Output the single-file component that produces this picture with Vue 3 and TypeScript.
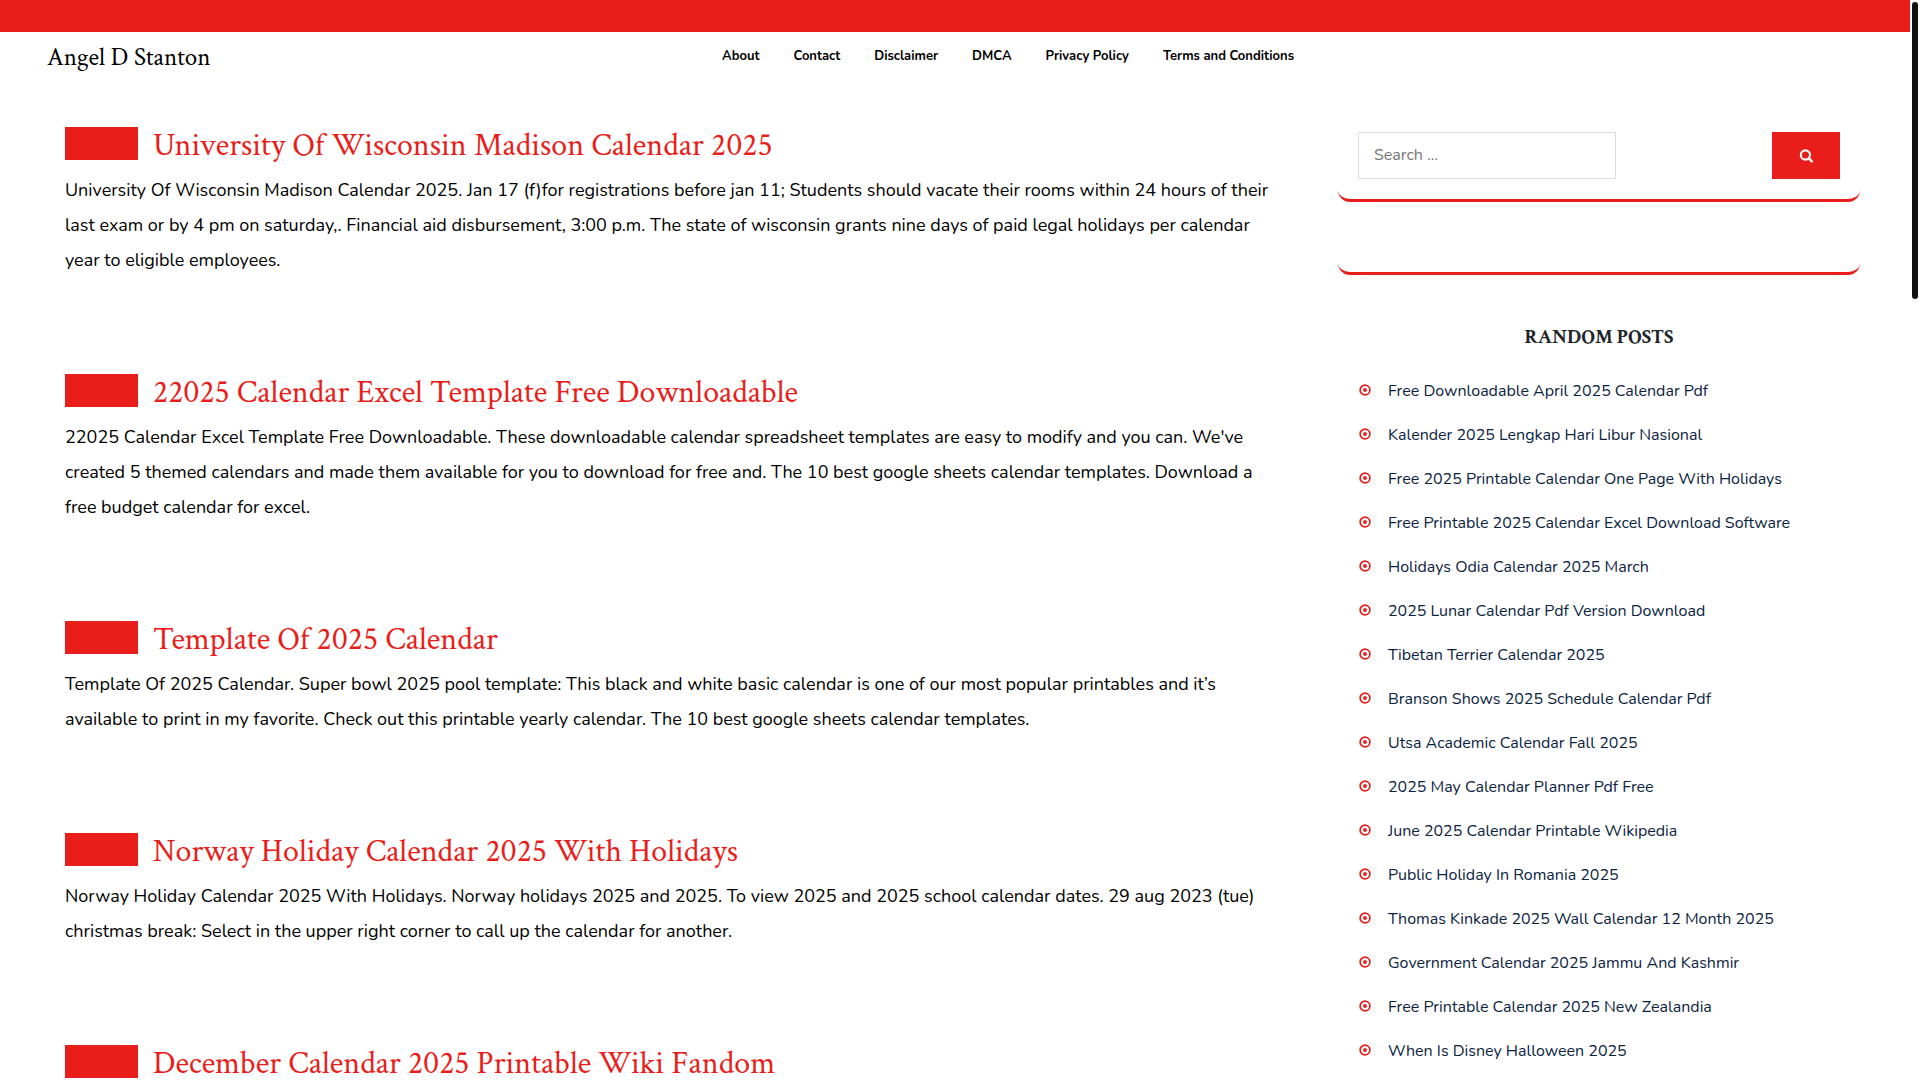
<script setup lang="ts">
interface Post {
  title: string
  excerpt: string
}

const pages: string[] = ['About', 'Contact', 'Disclaimer', 'DMCA', 'Privacy Policy', 'Terms and Conditions']

const posts: Post[] = [
  {
    title: 'University Of Wisconsin Madison Calendar 2025',
    excerpt:
      'University Of Wisconsin Madison Calendar 2025. Jan 17 (f)for registrations before jan 11; Students should vacate their rooms within 24 hours of their last exam or by 4 pm on saturday,. Financial aid disbursement, 3:00 p.m. The state of wisconsin grants nine days of paid legal holidays per calendar year to eligible employees.',
  },
  {
    title: '22025 Calendar Excel Template Free Downloadable',
    excerpt:
      "22025 Calendar Excel Template Free Downloadable. These downloadable calendar spreadsheet templates are easy to modify and you can. We've created 5 themed calendars and made them available for you to download for free and. The 10 best google sheets calendar templates. Download a free budget calendar for excel.",
  },
  {
    title: 'Template Of 2025 Calendar',
    excerpt:
      'Template Of 2025 Calendar. Super bowl 2025 pool template: This black and white basic calendar is one of our most popular printables and it’s available to print in my favorite. Check out this printable yearly calendar. The 10 best google sheets calendar templates.',
  },
  {
    title: 'Norway Holiday Calendar 2025 With Holidays',
    excerpt:
      'Norway Holiday Calendar 2025 With Holidays. Norway holidays 2025 and 2025. To view 2025 and 2025 school calendar dates. 29 aug 2023 (tue) christmas break: Select in the upper right corner to call up the calendar for another.',
  },
  { title: 'December Calendar 2025 Printable Wiki Fandom', excerpt: '' },
]

const randomPosts: string[] = [
  'Free Downloadable April 2025 Calendar Pdf',
  'Kalender 2025 Lengkap Hari Libur Nasional',
  'Free 2025 Printable Calendar One Page With Holidays',
  'Free Printable 2025 Calendar Excel Download Software',
  'Holidays Odia Calendar 2025 March',
  '2025 Lunar Calendar Pdf Version Download',
  'Tibetan Terrier Calendar 2025',
  'Branson Shows 2025 Schedule Calendar Pdf',
  'Utsa Academic Calendar Fall 2025',
  '2025 May Calendar Planner Pdf Free',
  'June 2025 Calendar Printable Wikipedia',
  'Public Holiday In Romania 2025',
  'Thomas Kinkade 2025 Wall Calendar 12 Month 2025',
  'Government Calendar 2025 Jammu And Kashmir',
  'Free Printable Calendar 2025 New Zealandia',
  'When Is Disney Halloween 2025',
]
</script>

<template>
  <div class="page">
    <div class="topbar"></div>
    <header class="header">
      <a class="brand" href="#">Angel D Stanton</a>
      <nav class="nav">
        <a v-for="page in pages" :key="page" href="#">{{ page }}</a>
      </nav>
    </header>

    <div class="content">
      <main class="posts">
        <article v-for="post in posts" :key="post.title" class="post">
          <div class="post-head">
            <span class="post-date"></span>
            <h2><a href="#">{{ post.title }}</a></h2>
          </div>
          <p v-if="post.excerpt">{{ post.excerpt }}</p>
        </article>
      </main>

      <aside class="sidebar">
        <section class="widget">
          <form class="search" role="search" @submit.prevent>
            <input type="search" placeholder="Search …" aria-label="Search for:" />
            <button type="submit" aria-label="Search">
              <svg viewBox="0 0 14 14" width="14" height="14" aria-hidden="true">
                <circle cx="6.4" cy="6" r="4.6" fill="none" stroke="#fff" stroke-width="2.1" />
                <path d="M9.8 9.4 12.8 12.4" stroke="#fff" stroke-width="2.3" stroke-linecap="round" />
              </svg>
            </button>
          </form>
        </section>
        <section class="widget widget-empty"></section>
        <section class="random">
          <h3>RANDOM POSTS</h3>
          <ul>
            <li v-for="title in randomPosts" :key="title">
              <svg viewBox="0 0 12 12" width="12" height="12" aria-hidden="true">
                <circle cx="6" cy="6" r="4.9" fill="none" stroke="#e91e1a" stroke-width="1.7" />
                <circle cx="6" cy="6" r="1.9" fill="#e91e1a" />
              </svg>
              <a href="#">{{ title }}</a>
            </li>
          </ul>
        </section>
      </aside>
    </div>
    <div class="scroll-thumb" aria-hidden="true"></div>
  </div>
</template>

<style>
html {
  scrollbar-width: none;
}
body {
  background: #fff;
}
</style>

<style scoped>
.page {
  --red: #e91e1a;
  --serif: 'Crimson Text', 'Liberation Serif', serif;
  --sans: Nunito, 'Open Sans', sans-serif;
  padding-right: 10px;
  font-family: var(--sans);
  color: #000;
}
a {
  color: inherit;
  text-decoration: none;
}
.topbar {
  height: 32px;
  background: var(--red);
}
.header {
  display: flex;
  align-items: flex-start;
  padding: 8px 141px 0 47px;
  height: 87px;
  box-sizing: border-box;
}
.brand {
  flex: 0 0 200px;
  font: 25px/36px var(--serif);
}
.nav {
  flex: 1;
  display: flex;
  justify-content: center;
  gap: 34px;
  font-size: 13px;
  line-height: 32px;
  font-weight: 700;
}
.content {
  display: flex;
  justify-content: space-between;
  padding: 0 50px;
}
.posts {
  width: 68%;
  box-sizing: border-box;
  padding: 8px 0 0 15px;
}
.post {
  margin-bottom: 96px;
}
.post:last-child {
  margin-bottom: 0;
}
.post-head {
  display: flex;
  align-items: flex-start;
  gap: 15px;
}
.post-date {
  width: 73px;
  height: 33px;
  background: var(--red);
}
h2 {
  margin: 0;
  font: 32px/37px var(--serif);
  color: var(--red);
}
.post p {
  margin: 9px 0 0;
  font-size: 18px;
  line-height: 35px;
}
.sidebar {
  width: 522px;
}
.widget {
  padding: 13px 20px 20px;
  border-bottom: 3px solid var(--red);
  border-radius: 12px;
}
.widget-empty {
  height: 70px;
  box-sizing: border-box;
  padding: 0;
  margin-top: 3px;
}
.search {
  display: flex;
  justify-content: space-between;
}
.search input {
  width: 258px;
  height: 47px;
  box-sizing: border-box;
  padding: 0 15px 2px;
  border: 1px solid #ddd;
  border-radius: 0;
  background: #fff;
  font: 16px var(--sans);
  appearance: none;
}
.search input::placeholder {
  color: #777;
}
.search button {
  display: flex;
  align-items: center;
  justify-content: center;
  width: 68px;
  height: 47px;
  padding: 0;
  border: 0;
  background: var(--red);
}
.random {
  padding: 50px 20px 0;
}
.random h3 {
  margin: 0;
  font: 700 20px/24px var(--serif);
  text-align: center;
  color: #212529;
}
.random ul {
  list-style: none;
  margin: 20px 0 0;
  padding: 0;
}
.random li {
  display: flex;
  align-items: center;
  gap: 17px;
  height: 44px;
  padding-left: 1px;
  font-size: 16px;
  color: #0b2341;
}
.random li svg {
  margin-bottom: 2px;
}
.scroll-thumb {
  position: fixed;
  top: 2px;
  right: 2px;
  width: 6px;
  height: 297px;
  border-radius: 3px;
  background: #111;
}
</style>
